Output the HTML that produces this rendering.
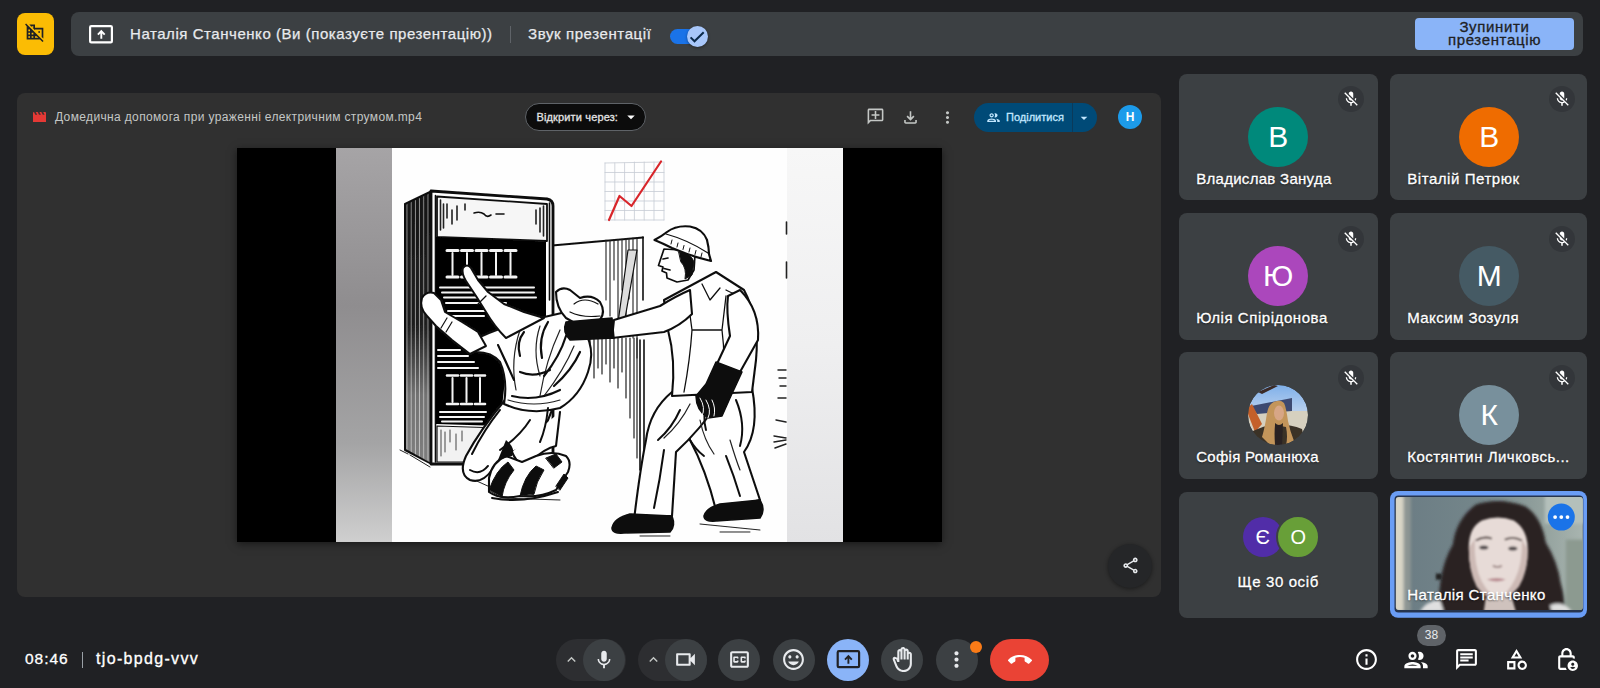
<!DOCTYPE html>
<html lang="uk"><head><meta charset="utf-8"><title>Meet</title>
<style>
*{box-sizing:border-box;margin:0;padding:0}
html,body{width:1600px;height:688px;overflow:hidden;background:#202124;font-family:"Liberation Sans",sans-serif;color:#fff}
.abs{position:absolute}
#ybtn{left:17px;top:13px;width:37.400px;height:42.200px;background:#fbbc04;border-radius:8px}
#topbar{left:71px;top:12px;width:1512px;height:44px;background:#3c4043;border-radius:8px}
.t{position:absolute;white-space:nowrap;line-height:1}
#stopbtn{-webkit-text-stroke:.3px #202124;left:1415px;top:18px;width:159px;height:32px;background:#8ab4f8;border-radius:4px;color:#202124;text-align:center;font-size:15px;line-height:13px;padding-top:2px}
#panel{left:17px;top:93px;width:1144px;height:504px;background:#303030;border-radius:8px}
#video{left:237px;top:148px;width:704.500px;height:393.600px;background:#000;box-shadow:0 2px 8px rgba(0,0,0,.5)}
.tile{position:absolute;background:#3c4043;border-radius:8px;width:198.500px;height:126.500px}
.av{position:absolute;width:60px;height:60px;border-radius:50%;left:69px;top:33px;text-align:center;font-size:30px;line-height:60px;color:#fff}
.mute{position:absolute;width:26px;height:26px;border-radius:50%;background:#33363a;left:159px;top:12.500px}
.nm{-webkit-text-stroke:.3px #fff;position:absolute;left:17px;top:96px;font-size:15px;line-height:17px;white-space:nowrap;color:#fff;text-shadow:0 1px 2px rgba(0,0,0,.6)}
.cb{position:absolute;width:40px;height:40px;border-radius:50%;background:#3c4043;top:639px}
</style></head><body>
<div id="ybtn" class="abs"></div>
<div id="topbar" class="abs"></div>
<div class="t" id="tt1" style="-webkit-text-stroke:.25px #e8eaed;letter-spacing:.55px;left:130px;top:26px;font-size:15px;color:#e8eaed">Наталія Станченко (Ви (показуєте презентацію))</div>
<div class="abs" style="left:510px;top:26px;width:1px;height:17px;background:#5f6368"></div>
<div class="t" id="tt2" style="-webkit-text-stroke:.25px #e8eaed;letter-spacing:.6px;left:528px;top:26px;font-size:15px;color:#e8eaed">Звук презентації</div>
<div id="stopbtn" class="abs"><span id="st1" style="letter-spacing:.65px">Зупинити</span><br><span id="st2" style="letter-spacing:.64px">презентацію</span></div>
<div id="panel" class="abs"></div>
<div id="video" class="abs"></div>
<!--ART-->
<svg class="abs" id="art" style="left:237px;top:148px" width="704" height="393.600" viewBox="237 148 704 393.600">
<defs>
<linearGradient id="gl" x1="0" y1="0" x2="0" y2="1"><stop offset="0" stop-color="#a6a4a6"/><stop offset=".4" stop-color="#8f8d8f"/><stop offset=".75" stop-color="#a4a4a5"/><stop offset="1" stop-color="#cfcfcf"/></linearGradient>
<linearGradient id="gr" x1="0" y1="0" x2="0" y2="1"><stop offset="0" stop-color="#f7f7f7"/><stop offset=".5" stop-color="#efeff0"/><stop offset="1" stop-color="#e2e2e4"/></linearGradient>
<pattern id="hat" width="4.200" height="8" patternUnits="userSpaceOnUse"><rect width="4.200" height="8" fill="#141414"/><rect x="3.300" width="0.900" height="8" fill="#9a9a9a"/></pattern><linearGradient id="sidefade" x1="0" y1="0" x2="0" y2="1"><stop offset="0" stop-color="#fff" stop-opacity="0"/><stop offset=".5" stop-color="#fff" stop-opacity=".05"/><stop offset=".75" stop-color="#fff" stop-opacity=".4"/><stop offset="1" stop-color="#fff" stop-opacity=".45"/></linearGradient>
<filter id="soft"><feGaussianBlur stdDeviation="0.45"/></filter>
</defs>
<rect x="237" y="148" width="704" height="394" fill="#000"/>
<rect x="336" y="148" width="56" height="394" fill="url(#gl)"/>
<rect x="392" y="148" width="395" height="394" fill="#fefefe"/>
<rect x="787" y="148" width="56" height="394" fill="url(#gr)"/>
<g filter="url(#soft)" stroke-linejoin="round" stroke-linecap="round">
<!-- chart -->
<g stroke="#c5cad3" stroke-width="0.8" fill="none">
<path d="M605 163L663 162M605 172.500H664M605 182H664M605 191.500H664M605 201H664M605 210.500H664M605 220H664"/>
<path d="M605 163V220M614.800 163V220M624.600 163V220M634.400 162V220M644.200 162V220M654 162V220M664 162V220"/>
</g>
<path d="M609 220L619.500 196L631.500 206L661 161.500" stroke="#d8262c" stroke-width="2.200" fill="none"/>
<!-- floor shadow lines -->
<path d="M410 455l20 12M400 450l8 4M470 478l40 18M500 498l60 2M560 425h35" stroke="#222" stroke-width="1" fill="none"/>
<!-- cabinet door (open) -->
<path d="M552 245L643 237L644 470L552 470Z" fill="#fff" stroke="none"/>
<path d="M552 245.500L643 237.500" stroke="#111" stroke-width="2" fill="none"/>
<path d="M643 237V300M640 340V470M644 340V452" stroke="#111" stroke-width="1.600" fill="none"/>
<path d="M606 240v60M610 241v75M614 240v40M618 240v82M622 240v50M626 239v92M629 239v60M633 238v100M637 238v120" stroke="#222" stroke-width="1.100" fill="none"/>
<path d="M628 250L637 250L623 330L617 330Z" fill="#ddd" stroke="#111" stroke-width="1.200"/>
<path d="M582 338v28M586 338v34M590 338v24M594 338v40M598 338v30M602 338v36M606 338v26M610 338v44M614 338v30M618 338v50M622 338v34M626 338v60M630 338v80M634 338v100M637 338v120" stroke="#222" stroke-width="1.200" fill="none"/>
<!-- cabinet left side -->
<path d="M405 204L432 191V464L405 450Z" fill="url(#hat)" stroke="#111" stroke-width="2"/><path d="M406 204L431 192V463L406 449Z" fill="url(#sidefade)"/>
<!-- cabinet front -->
<path d="M431 191L547 199Q553 200 553 206V300L553 464H431Z" fill="#fff" stroke="#0c0c0c" stroke-width="2.800"/><path d="M435.500 195.500V462M549.500 203V300" stroke="#0c0c0c" stroke-width="1.600" fill="none"/>
<path d="M437 196.500L547 204V241L437 237Z" fill="#f6f6f6" stroke="#111" stroke-width="1.800"/>
<path d="M440.500 200v30M443.500 204v24M447 204v14M452 210v14M457 206v14M465 204v6M540 208v24M543.500 206v30M536 210v14" stroke="#222" stroke-width="1.600" fill="none"/>
<path d="M474 213q6-2 10 1q3 4 7 1M496 214h8" stroke="#111" stroke-width="1.600" fill="none"/>
<path d="M436 237L546 241.500V330L505 380L500 426L436 424Z" fill="#050505"/>
<!-- switches top row -->
<g stroke="#f4f4f4" stroke-width="3" fill="none">
<path d="M447 250.500h11M461.500 250.500h11M476 250.500h11M490.500 250.500h11M505 250.500h11"/>
<path d="M447 277h11M461.500 277h11M476 277h11M490.500 277h11M505 277h11"/>
</g>
<g stroke="#f4f4f4" stroke-width="2" fill="none">
<path d="M452.500 253v22M467 253v22M481.500 253v22M496 253v22M510.500 253v22"/>
<path d="M440 287.500h94M442 292.500h92M444 297.500h92M446 303h60M448 311h40M450 316h34"/>
<path d="M438 350h22M438 356h30M438 362h36M438 368h40"/>
<path d="M440 412h46M440 417h44M442 421.500h40"/>
</g>
<g stroke="#f4f4f4" stroke-width="2.600" fill="none">
<path d="M447 375.500h11M461 375.500h11M475 375.500h10M447 404h11M461 404h11M475 404h10"/>
</g>
<path d="M452.500 378v24M466.500 378v24M480 378v24" stroke="#f4f4f4" stroke-width="2" fill="none"/>
<!-- bottom panel of cabinet -->
<path d="M437 426L500 428V462H437Z" fill="#f2f2f2" stroke="#111" stroke-width="1.200"/>
<path d="M441 430v26M445 432v20M450 430v12M456 434v16M462 431v10" stroke="#444" stroke-width="1" fill="none"/>
<!-- kneeling man: legs -->
<path d="M505 400Q480 430 466 456Q458 474 470 480Q482 484 492 470Q500 458 512 452L540 440L552 410Z" fill="#fff" stroke="#111" stroke-width="2.100"/>
<path d="M512 452Q520 470 530 462Q545 448 556 446L560 412" fill="#fff" stroke="#111" stroke-width="2.100"/>
<path d="M489 478Q492 462 506 456L522 462L536 456Q552 450 566 456Q572 462 568 472L556 490Q540 498 520 496Q500 500 489 492Z" fill="#fff" stroke="#111" stroke-width="2.100"/>
<path d="M489 490Q496 470 508 462L514 470Q504 482 502 497ZM520 496Q524 476 536 466L544 470Q536 482 534 494ZM546 458l10-4l6 8l-8 6ZM556 486l8-12l4 4l-8 12Z" fill="#111" stroke="#111" stroke-width="1"/>
<path d="M492 498q30 6 66-6" stroke="#111" stroke-width="2" fill="none"/>
<!-- kneeling man: torso -->
<path d="M470 342Q500 326 540 318L566 312L584 330Q596 350 588 372Q580 396 560 408Q530 416 504 404Q508 380 500 362Q492 352 476 352Z" fill="#fff" stroke="#111" stroke-width="2.100"/>
<path d="M520 330q-10 30 -4 60M540 326q-8 24 0 50M560 330q-14 30 -20 66M574 346q-10 24 -30 50M508 400q26 8 52 0" stroke="#222" stroke-width="1.200" fill="none"/>
<path d="M498 345L514 380L506 362Z" fill="#0a0a0a" stroke="#0a0a0a" stroke-width="2"/>
<path d="M524 332q-8 10-4 24M548 322q-10 16-6 36M566 336q-6 20-22 40M580 352q-8 18-26 34M520 372q14 6 30-2M512 396q24 6 48-6" stroke="#111" stroke-width="2.200" fill="none"/>
<path d="M500 410q-16 20-28 44M530 420q-10 16-30 30M548 408q-2 20-8 34M470 470q10 6 18-4" stroke="#111" stroke-width="2" fill="none"/>
<path d="M506 440q10 8 6 16l-14 4z" fill="#111"/>
<!-- left arm (gripping) -->
<path d="M422 298Q426 291 434 293L441 300L445 312L462 322L478 332L486 346L470 354L452 340L436 326L427 316Q419 308 422 298Z" fill="#fff" stroke="#111" stroke-width="2"/>
<path d="M447 318l-6 10M452 322l-6 10" stroke="#111" stroke-width="1.200" fill="none"/>
<!-- reaching arm -->
<path d="M463 268Q467 263 471 268L478 280L488 292L504 304L524 312L544 318L506 338Q494 326 486 312L476 296L468 284Q461 274 463 268Z" fill="#fff" stroke="#111" stroke-width="2"/><path d="M486 296l-8 8" stroke="#111" stroke-width="1.300" fill="none"/>
<!-- kneeling man head -->
<path d="M556 292Q562 286 570 290L580 298Q592 294 600 302Q606 312 600 320L580 326L566 318Q556 308 556 292Z" fill="#fff" stroke="#111" stroke-width="2.100"/>
<path d="M574 304q10-8 24 0M570 312q12 6 30 4" stroke="#111" stroke-width="1.200" fill="none"/>
<!-- standing man: back leg -->
<path d="M716 392L752 388Q760 430 744 452L760 500L716 510Q706 470 690 440Q684 420 690 400Z" fill="#fff" stroke="#111" stroke-width="2.100"/>
<!-- front leg -->
<path d="M672 392L722 398Q700 430 676 452L672 516L634 520Q640 470 646 440Q650 410 672 392Z" fill="#fff" stroke="#111" stroke-width="2.100"/>
<path d="M690 404q-10 20 -26 34M700 420q4 20 14 34M730 440q6 20 10 30" stroke="#222" stroke-width="1.200" fill="none"/>
<path d="M680 410q-8 18-22 30M664 450q-4 30-10 58M708 400q-6 16-2 30M736 400q10 24 4 46M726 456q8 20 14 40M690 440q6 10 14 16" stroke="#111" stroke-width="2" fill="none"/>
<path d="M700 300q-4 40 2 90M744 300q6 30 2 60" stroke="#111" stroke-width="1.600" fill="none"/>
<!-- shoes -->
<path d="M612 528Q614 518 630 514L672 516Q676 526 670 532L624 533Q612 534 612 528Z" fill="#0a0a0a" stroke="#0a0a0a" stroke-width="1.500"/>
<path d="M704 516Q706 508 720 504L760 500Q766 510 760 518L716 521Q704 522 704 516Z" fill="#0a0a0a" stroke="#0a0a0a" stroke-width="1.500"/>
<path d="M640 536h30M700 524l60 6M720 532h30" stroke="#222" stroke-width="1" fill="none"/>
<!-- torso -->
<path d="M690 286L716 272L744 290Q760 320 756 360L752 392L672 396Q676 360 668 330L664 300Z" fill="#fff" stroke="#111" stroke-width="2.100"/>
<path d="M688 300L692 330H722L726 296M692 330Q690 360 684 392M722 330Q726 360 722 394M702 284l8 16l10-12M726 290q10 6 16 2" stroke="#111" stroke-width="1.300" fill="none"/>
<!-- extended arm -->
<path d="M690 290Q676 296 660 306L614 320L612 338L664 332Q680 326 692 314Z" fill="#fff" stroke="#111" stroke-width="2.100"/>
<path d="M566 322L612 318L614 338L570 340Q562 332 566 322Z" fill="#0a0a0a" stroke="#0a0a0a" stroke-width="1.500"/>
<!-- hanging arm -->
<path d="M740 290Q760 310 758 340L740 372L716 366L730 336Q726 310 728 296Z" fill="#fff" stroke="#111" stroke-width="2.100"/>
<path d="M716 362L742 372L730 398L722 416L708 418Q696 410 696 396L706 384Z" fill="#0a0a0a" stroke="#0a0a0a" stroke-width="1.500"/>
<path d="M700 398q6 10 2 18M706 400q6 10 2 18M712 400q4 8 2 16" stroke="#fff" stroke-width="1" fill="none"/>
<!-- head -->
<path d="M664 249L661 258L658.500 265.500L663 267L662 271L666.500 273L667 278L677 282L688 280L694 270L695 255L680 250Z" fill="#fff" stroke="#111" stroke-width="1.700"/>
<path d="M679 252Q691 253 694 262L692 275L685 279Q687 268 681 262Z" fill="#111" stroke="#111" stroke-width="1"/>
<path d="M663 259l5-1M664 268.500l6 1.500" stroke="#111" stroke-width="1.700" fill="none"/>
<!-- helmet -->
<path d="M654.500 240Q662 236 667 232Q676 225 690 226.500Q703 229 707 240Q709 248 709 254L711 261Q690 256 672 248Q662 243 654.500 240Z" fill="#fff" stroke="#111" stroke-width="2.200"/>
<path d="M666 234Q688 240 708 253" stroke="#111" stroke-width="1.200" fill="none"/>
<path d="M672 240l-1 4M678 243l-1 4M684 245.500l-1 4M690 248l-1 4M696 250.500l-1 4M702 253l-1 4" stroke="#111" stroke-width="1" fill="none"/>
<!-- right edge marks -->
<path d="M786.500 222v12M786.500 262v16" stroke="#222" stroke-width="1.600" fill="none"/>
<path d="M778 370h8M779 378h7M780 386h6M778 398h8M776 420l10 2M774 436l12 2M774 442l12-2M775 448l11-4" stroke="#222" stroke-width="1.500" fill="none"/>
</g>
</svg>

<!--/ART-->
<div class="t" id="ft" style="letter-spacing:.356px;left:55px;top:111px;font-size:12px;color:#c4c7c5">Домедична допомога при ураженні електричним струмом.mp4</div>

<div class="tile" style="left:1179.200px;top:73.700px"><div class="av" style="background:#00897b">В</div><div class="mute"><svg width="18" height="18" viewBox="0 0 24 24" style="position:absolute;left:4px;top:4px"><path fill="#fff" d="M19 11h-1.700c0 .740-.160 1.430-.430 2.050l1.230 1.230c.560-.980.900-2.090.900-3.280zm-4.020.170c0-.060.020-.110.020-.170V5c0-1.660-1.340-3-3-3S9 3.340 9 5v.180l5.980 5.990zM4.270 3L3 4.270l6.010 6.010V11c0 1.660 1.330 3 2.990 3 .220 0 .440-.030.650-.080l1.660 1.660c-.710.330-1.500.520-2.310.520-2.760 0-5.300-2.100-5.300-5.100H5c0 3.410 2.720 6.230 6 6.720V21h2v-3.280c.910-.130 1.770-.450 2.540-.900L19.730 21 21 19.730 4.270 3z"/></svg></div><div id="n1" class="nm" style="letter-spacing:0.29px">Владислав Зануда</div></div>
<div class="tile" style="left:1390.200px;top:73.700px;width:197.200px"><div class="av" style="background:#ef6c00">В</div><div class="mute"><svg width="18" height="18" viewBox="0 0 24 24" style="position:absolute;left:4px;top:4px"><path fill="#fff" d="M19 11h-1.700c0 .740-.160 1.430-.430 2.050l1.230 1.230c.560-.980.900-2.090.900-3.280zm-4.020.170c0-.060.020-.110.020-.170V5c0-1.660-1.340-3-3-3S9 3.340 9 5v.180l5.980 5.990zM4.270 3L3 4.270l6.010 6.010V11c0 1.660 1.330 3 2.990 3 .220 0 .440-.030.650-.080l1.660 1.660c-.710.330-1.500.520-2.310.520-2.760 0-5.300-2.100-5.300-5.100H5c0 3.410 2.720 6.230 6 6.720V21h2v-3.280c.910-.130 1.770-.450 2.540-.900L19.730 21 21 19.730 4.270 3z"/></svg></div><div id="n2" class="nm" style="letter-spacing:0.56px">Віталій Петрюк</div></div>
<div class="tile" style="left:1179.200px;top:213px"><div class="av" style="background:#ab47bc">Ю</div><div class="mute"><svg width="18" height="18" viewBox="0 0 24 24" style="position:absolute;left:4px;top:4px"><path fill="#fff" d="M19 11h-1.700c0 .740-.160 1.430-.430 2.050l1.230 1.230c.560-.980.900-2.090.900-3.280zm-4.020.170c0-.060.020-.110.020-.170V5c0-1.660-1.340-3-3-3S9 3.340 9 5v.180l5.980 5.990zM4.270 3L3 4.270l6.010 6.010V11c0 1.660 1.330 3 2.990 3 .220 0 .440-.030.650-.080l1.660 1.660c-.710.330-1.500.520-2.310.520-2.760 0-5.300-2.100-5.300-5.100H5c0 3.410 2.720 6.230 6 6.720V21h2v-3.280c.910-.130 1.770-.450 2.540-.900L19.730 21 21 19.730 4.270 3z"/></svg></div><div id="n3" class="nm" style="letter-spacing:0.56px">Юлія Спірідонова</div></div>
<div class="tile" style="left:1390.200px;top:213px;width:197.200px"><div class="av" style="background:#455a64">М</div><div class="mute"><svg width="18" height="18" viewBox="0 0 24 24" style="position:absolute;left:4px;top:4px"><path fill="#fff" d="M19 11h-1.700c0 .740-.160 1.430-.430 2.050l1.230 1.230c.560-.980.900-2.090.900-3.280zm-4.020.170c0-.060.020-.110.020-.170V5c0-1.660-1.340-3-3-3S9 3.340 9 5v.180l5.980 5.990zM4.270 3L3 4.270l6.010 6.010V11c0 1.660 1.330 3 2.990 3 .220 0 .440-.030.650-.080l1.660 1.660c-.710.330-1.500.520-2.310.520-2.760 0-5.300-2.100-5.300-5.100H5c0 3.410 2.720 6.230 6 6.720V21h2v-3.280c.910-.130 1.770-.450 2.540-.900L19.730 21 21 19.730 4.270 3z"/></svg></div><div id="n4" class="nm" style="letter-spacing:0.45px">Максим Зозуля</div></div>
<div class="tile" style="left:1179.200px;top:352.300px"><svg class="av" style="left:68.800px;top:32.700px" width="60.500" height="60.500" viewBox="0 0 60 60"><defs><clipPath id="cpa"><circle cx="30" cy="30" r="30"/></clipPath><filter id="bla"><feGaussianBlur stdDeviation="0.6"/></filter><linearGradient id="sky" x1="0" y1="0" x2="0" y2="1"><stop offset="0" stop-color="#7fb0ea"/><stop offset="1" stop-color="#c0d4ee"/></linearGradient></defs>
<g clip-path="url(#cpa)"><g filter="url(#bla)">
<rect width="60" height="30" fill="url(#sky)"/>
<rect x="0" y="26" width="60" height="22" fill="#d6d0bf"/>
<path d="M3 21L44 13V26L9 29Z" fill="#3d4a70"/>
<path d="M10 7L26 0L30 1L14 9Z" fill="#3a2a26"/>
<path d="M-2 24L4 19L14 39L7 47Z" fill="#c4602a"/>
<path d="M5 46Q30 34 54 44L58 62H0Z" fill="#3a3028"/>
<path d="M29 16Q21 17 19 28Q17 42 14 52L22 60H27Q26 48 27 40L38 42Q40 52 38 60L46 56Q42 46 40 36Q38 22 36 18Q33 15 29 16Z" fill="#c3955a"/>
<ellipse cx="31" cy="28" rx="5" ry="7.500" fill="#d7a686"/>
<path d="M27 38Q31 42 35 38L34 60H27Z" fill="#2a2420"/>
</g></g></svg><div class="mute"><svg width="18" height="18" viewBox="0 0 24 24" style="position:absolute;left:4px;top:4px"><path fill="#fff" d="M19 11h-1.700c0 .740-.160 1.430-.430 2.050l1.230 1.230c.560-.980.900-2.090.900-3.280zm-4.020.170c0-.060.020-.110.020-.170V5c0-1.660-1.340-3-3-3S9 3.340 9 5v.180l5.980 5.990zM4.270 3L3 4.270l6.010 6.010V11c0 1.660 1.330 3 2.990 3 .220 0 .440-.030.650-.080l1.660 1.660c-.710.330-1.500.520-2.310.520-2.760 0-5.300-2.100-5.300-5.100H5c0 3.410 2.720 6.230 6 6.720V21h2v-3.280c.910-.130 1.770-.450 2.540-.900L19.730 21 21 19.730 4.270 3z"/></svg></div><div id="n5" class="nm" style="letter-spacing:0.29px">Софія Романюха</div></div>
<div class="tile" style="left:1390.200px;top:352.300px;width:197.200px"><div class="av" style="background:#78909c">К</div><div class="mute"><svg width="18" height="18" viewBox="0 0 24 24" style="position:absolute;left:4px;top:4px"><path fill="#fff" d="M19 11h-1.700c0 .740-.160 1.430-.430 2.050l1.230 1.230c.560-.980.900-2.090.900-3.280zm-4.020.170c0-.060.020-.110.020-.170V5c0-1.660-1.340-3-3-3S9 3.340 9 5v.180l5.980 5.990zM4.270 3L3 4.270l6.010 6.010V11c0 1.660 1.330 3 2.990 3 .220 0 .440-.030.650-.080l1.660 1.660c-.710.330-1.500.520-2.310.520-2.760 0-5.300-2.100-5.300-5.100H5c0 3.410 2.720 6.230 6 6.720V21h2v-3.280c.910-.130 1.770-.450 2.540-.900L19.730 21 21 19.730 4.270 3z"/></svg></div><div id="n6" class="nm" style="letter-spacing:0.49px">Костянтин Личковсь...</div></div>
<div class="tile" style="left:1179.200px;top:491.700px"><div class="abs" style="left:63.400px;top:25.600px;width:40px;height:40px;border-radius:50%;background:#512da8;color:#fff;font-size:20px;line-height:40px;text-align:center">Є</div><div class="abs" style="left:97px;top:23.700px;width:44px;height:44px;border-radius:50%;background:#689f38;border:2px solid #3c4043;color:#fff;font-size:20px;line-height:40px;text-align:center">О</div><div id="n7" class="nm" style="letter-spacing:0.62px;left:0;width:198px;text-align:center;top:81px">Ще 30 осіб</div></div>
<svg class="abs" style="left:1390.200px;top:491.400px" width="197" height="126.800" viewBox="1390.200 491.400 197 126.800">
<defs><clipPath id="cpv"><rect x="1396" y="497.500" width="187" height="113" rx="3"/></clipPath><filter id="blv"><feGaussianBlur stdDeviation="1.600"/></filter><filter id="blv2"><feGaussianBlur stdDeviation="0.800"/></filter>
<linearGradient id="wall" x1="0" y1="0" x2="1" y2="0"><stop offset="0" stop-color="#6b7c84"/><stop offset=".45" stop-color="#74868a"/><stop offset=".8" stop-color="#95a39f"/><stop offset="1" stop-color="#a9b5b0"/></linearGradient></defs>
<rect x="1390.200" y="491.400" width="197" height="126.800" rx="8" fill="#6a9df5"/>
<rect x="1394.700" y="496" width="188.800" height="117" rx="4" fill="#263550"/>
<g clip-path="url(#cpv)">
<rect x="1396" y="497" width="188" height="114" fill="url(#wall)"/>
<g filter="url(#blv)">
<rect x="1394" y="496" width="10" height="116" fill="#d9d5c6"/>
<rect x="1404" y="496" width="7" height="116" fill="#8d9593"/>
<rect x="1545" y="494" width="42" height="30" fill="#b4c0bb"/>
<rect x="1566" y="540" width="20" height="75" fill="#8c9a90"/>
<path d="M1476 505Q1500 497 1526 507Q1542 518 1546 543Q1558 562 1561 584Q1566 600 1564 614H1440Q1438 596 1441 580Q1444 560 1453 545Q1456 520 1476 505Z" fill="#2a2124"/>
<path d="M1420 612Q1426 602 1440 600L1444 612ZM1550 606Q1562 600 1572 612H1552Z" fill="#e0e0e0"/>
</g>
<g filter="url(#blv2)">
<path d="M1469 548Q1469 528 1482 521Q1498 515 1514 521Q1528 530 1528 550Q1528 572 1519 587Q1509 600 1498 600Q1486 600 1477 587Q1469 572 1469 548Z" fill="#e7dbd7"/><path d="M1469 548Q1469 572 1477 587Q1486 600 1498 600Q1490 596 1482 582Q1474 566 1475 540ZM1528 550Q1528 572 1519 587Q1509 600 1498 600Q1508 594 1515 580Q1523 564 1522 540Z" fill="#cdbab5"/>
<path d="M1486 598h26l4 14h-32z" fill="#cfc2bd"/>
<path d="M1476 541q8-5 16-2M1505 540q9-4 17 1" stroke="#4a3a38" stroke-width="1.800" fill="none"/>
<ellipse cx="1484" cy="548" rx="4.500" ry="2" fill="#4d4648"/><ellipse cx="1513" cy="549" rx="4.500" ry="2" fill="#4d4648"/>
<path d="M1493 566q5 3 9 0" stroke="#a08a88" stroke-width="2" fill="none"/>
<path d="M1487 580q10-3 19 0q-9 4-19 0z" fill="#b98a90"/>
<rect x="1436" y="574" width="6" height="6" fill="#222"/>
</g>
</g>
<circle cx="1561.500" cy="517.500" r="13.500" fill="#1a73e8"/>
<circle cx="1555.300" cy="517.500" r="1.900" fill="#fff"/><circle cx="1561.500" cy="517.500" r="1.900" fill="#fff"/><circle cx="1567.700" cy="517.500" r="1.900" fill="#fff"/>
</svg>
<div id="n8" class="nm" style="letter-spacing:0.38px;left:1407.300px;top:585.800px">Наталія Станченко</div>

<div class="t" id="clk" style="-webkit-text-stroke:.3px #fff;letter-spacing:.98px;left:25px;top:651.400px;font-size:15.500px;color:#fff">08:46</div>
<div class="abs" style="left:82px;top:652px;width:1px;height:16px;background:#9aa0a6"></div>
<div class="t" id="code" style="-webkit-text-stroke:.3px #fff;letter-spacing:1.33px;left:96px;top:650.850px;font-size:16px;color:#fff">tjo-bpdg-vvv</div>
<div class="abs" style="left:556px;top:638.600px;width:69.500px;height:42px;border-radius:21px;background:#2d2e31"></div>
<div class="abs" style="left:583px;top:638.600px;width:42px;height:42px;border-radius:50%;background:#3c4043"></div>
<svg class="abs" style="left:563px;top:650.8px" width="17" height="17" viewBox="0 0 24 24"><path fill="#c4c7c5" d="M12 8l-6 6 1.410 1.410L12 10.830l4.590 4.580L18 14z"/></svg>
<svg class="abs" style="left:593.3px;top:648.5px" width="22" height="22" viewBox="0 0 24 24"><path fill="#e8eaed" d="M12 14c1.660 0 2.990-1.340 2.990-3L15 5c0-1.660-1.340-3-3-3S9 3.340 9 5v6c0 1.660 1.340 3 3 3zm5.300-3c0 3-2.540 5.100-5.300 5.100S6.700 14 6.700 11H5c0 3.410 2.720 6.230 6 6.720V21h2v-3.280c3.280-.480 6-3.300 6-6.720h-1.700z"/></svg>
<div class="abs" style="left:637.500px;top:638.600px;width:69.500px;height:42px;border-radius:21px;background:#2d2e31"></div>
<div class="abs" style="left:664.5px;top:638.600px;width:42px;height:42px;border-radius:50%;background:#3c4043"></div>
<svg class="abs" style="left:644.9px;top:650.8px" width="17" height="17" viewBox="0 0 24 24"><path fill="#c4c7c5" d="M12 8l-6 6 1.410 1.410L12 10.830l4.590 4.580L18 14z"/></svg>
<svg class="abs" style="left:673.1px;top:647px" width="25" height="25" viewBox="0 0 24 24"><path fill="#e8eaed" d="M15 8v8H5V8h10m1-2H4c-.550 0-1 .450-1 1v10c0 .550.450 1 1 1h12c.550 0 1-.450 1-1v-3.500l4 4v-11l-4 4V7c0-.550-.450-1-1-1z"/></svg>
<div class="abs" style="left:718.1px;top:638.600px;width:42px;height:42px;border-radius:50%;background:#3c4043"></div>
<svg class="abs" style="left:726.6px;top:647px" width="25" height="25" viewBox="0 0 24 24"><path fill="#e8eaed" d="M19 4H5c-1.110 0-2 .900-2 2v12c0 1.100.890 2 2 2h14c1.100 0 2-.900 2-2V6c0-1.100-.900-2-2-2zm0 14H5V6h14v12zM7 15h3c.550 0 1-.450 1-1v-1H9.500v.500h-2v-3h2v.500H11v-1c0-.550-.450-1-1-1H7c-.550 0-1 .450-1 1v4c0 .550.450 1 1 1zm7 0h3c.550 0 1-.450 1-1v-1h-1.500v.500h-2v-3h2v.500H18v-1c0-.550-.450-1-1-1h-3c-.550 0-1 .450-1 1v4c0 .550.450 1 1 1z"/></svg>
<div class="abs" style="left:772.9px;top:638.600px;width:42px;height:42px;border-radius:50%;background:#3c4043"></div>
<svg class="abs" style="left:781.4px;top:647px" width="25" height="25" viewBox="0 0 24 24"><path fill="#e8eaed" d="M11.990 2C6.470 2 2 6.480 2 12s4.470 10 9.990 10C17.520 22 22 17.520 22 12S17.520 2 11.990 2zM12 20c-4.420 0-8-3.580-8-8s3.580-8 8-8 8 3.580 8 8-3.580 8-8 8zm3.500-9c.830 0 1.500-.670 1.500-1.500S16.330 8 15.500 8 14 8.670 14 9.500s.670 1.500 1.500 1.500zm-7 0c.830 0 1.500-.670 1.500-1.500S9.330 8 8.500 8 7 8.670 7 9.500 7.670 11 8.500 11zm3.500 6.500c2.330 0 4.310-1.460 5.110-3.500H6.890c.800 2.040 2.780 3.500 5.110 3.500z"/></svg>
<div class="abs" style="left:826.9px;top:638.600px;width:42px;height:42px;border-radius:50%;background:#8ab4f8"></div>
<svg class="abs" style="left:835px;top:648px" width="26" height="22" viewBox="835 648 26 22"><rect x="837.700" y="651.200" width="21.400" height="16" rx="1.200" fill="none" stroke="#202124" stroke-width="2.200"/><path d="M848.400 663.700V656.500M845 659.600L848.400 656.100L851.800 659.600" fill="none" stroke="#202124" stroke-width="1.900"/></svg>
<div class="abs" style="left:881.3px;top:638.600px;width:42px;height:42px;border-radius:50%;background:#3c4043"></div>
<svg class="abs" style="left:889.8px;top:647px" width="25" height="25" viewBox="0 0 24 24"><path fill="#e8eaed" d="M21 7c0-1.380-1.120-2.500-2.500-2.500-.170 0-.340.020-.500.050V4c0-1.380-1.120-2.500-2.500-2.500-.230 0-.460.030-.670.090C14.460.660 13.560 0 12.500 0c-1.230 0-2.250.890-2.460 2.060C9.870 2.020 9.690 2 9.500 2 8.120 2 7 3.120 7 4.500v5.890c-.340-.310-.760-.540-1.220-.660L5.010 9.520c-.830-.230-1.700.090-2.190.830-.380.570-.400 1.310-.150 1.950l2.560 6.430C6.490 21.910 9.570 24 13 24c4.420 0 8-3.580 8-8V7zm-2 9c0 3.310-2.690 6-6 6-2.610 0-4.950-1.590-5.910-4.010l-2.600-6.540 1.530.380L7 14.500h2v-10c0-.280.220-.500.500-.500s.500.220.500.500V12h2V2.500c0-.280.220-.500.500-.500s.500.220.500.500V12h2V4c0-.280.220-.500.500-.500s.500.220.500.500v8h2V7c0-.280.220-.500.500-.500s.500.220.500.500v9z"/></svg>
<div class="abs" style="left:935.7px;top:638.600px;width:42px;height:42px;border-radius:50%;background:#3c4043"></div>
<svg class="abs" style="left:944.2px;top:647px" width="25" height="25" viewBox="0 0 24 24"><path fill="#e8eaed" d="M12 8c1.100 0 2-.900 2-2s-.900-2-2-2-2 .900-2 2 .900 2 2 2zm0 2c-1.100 0-2 .900-2 2s.900 2 2 2 2-.900 2-2-.900-2-2-2zm0 6c-1.100 0-2 .900-2 2s.900 2 2 2 2-.900 2-2-.900-2-2-2z"/></svg>
<div class="abs" style="left:970px;top:640.750px;width:12px;height:12px;border-radius:50%;background:#fa7b17"></div>
<div class="abs" style="left:990px;top:638.600px;width:59px;height:42px;border-radius:21px;background:#ea4335"></div>
<svg class="abs" style="left:1007.5px;top:647.5px" width="24" height="24" viewBox="0 0 24 24"><path fill="#fff" d="M12 9c-1.600 0-3.150.250-4.600.720v3.100c0 .390-.230.740-.560.900-.980.490-1.870 1.120-2.660 1.850-.180.180-.430.280-.700.280-.280 0-.530-.110-.710-.290L.290 13.080c-.180-.170-.290-.420-.290-.700 0-.280.110-.530.290-.710C3.340 8.780 7.460 7 12 7s8.660 1.780 11.710 4.670c.180.180.290.430.290.710 0 .280-.110.530-.290.710l-2.480 2.480c-.180.180-.430.290-.710.290-.270 0-.520-.110-.700-.280-.790-.740-1.690-1.360-2.670-1.850-.330-.160-.560-.500-.560-.900v-3.100C15.150 9.250 13.600 9 12 9z"/></svg>
<svg class="abs" style="left:1353.5px;top:647.25px" width="25" height="25" viewBox="0 0 24 24"><path fill="#fff" d="M11 7h2v2h-2zm0 4h2v6h-2zm1-9C6.480 2 2 6.480 2 12s4.480 10 10 10 10-4.480 10-10S17.520 2 12 2zm0 18c-4.410 0-8-3.590-8-8s3.590-8 8-8 8 3.590 8 8-3.590 8-8 8z"/></svg>
<svg class="abs" style="left:1402px;top:645.9px" width="28" height="28" viewBox="0 0 24 24"><path fill="#fff" d="M9 13.750c-2.340 0-7 1.170-7 3.500V19h14v-1.750c0-2.330-4.660-3.500-7-3.500zM4.340 17c.840-.580 2.870-1.250 4.660-1.250s3.820.670 4.660 1.250H4.340zM9 12c1.930 0 3.500-1.570 3.500-3.500S10.930 5 9 5 5.500 6.570 5.500 8.500 7.070 12 9 12zm0-5c.830 0 1.500.670 1.500 1.500S9.830 10 9 10s-1.500-.670-1.500-1.500S8.170 7 9 7zm7.040 6.810c1.160.840 1.960 1.960 1.960 3.440V19h4v-1.750c0-2.020-3.500-3.170-5.960-3.440zM15 12c1.930 0 3.500-1.570 3.500-3.500S16.930 5 15 5c-.540 0-1.040.130-1.500.350.630.890 1 1.980 1 3.150s-.370 2.260-1 3.150c.460.220.960.350 1.500.350z"/></svg>
<svg class="abs" style="left:1453.8px;top:647.25px" width="25" height="25" viewBox="0 0 24 24"><path fill="#fff" d="M4 4h16v12H5.170L4 17.170V4m0-2c-1.100 0-1.990.900-1.990 2L2 22l4-4h14c1.100 0 2-.900 2-2V4c0-1.100-.900-2-2-2H4zm2 10h8v2H6v-2zm0-3h12v2H6V9zm0-3h12v2H6V6z"/></svg>
<svg class="abs" style="left:1504.3px;top:647.25px" width="25" height="25" viewBox="0 0 24 24"><path fill="#fff" d="M12 2l-5.500 9h11L12 2zm0 3.840L13.930 9h-3.870L12 5.840zM17.500 13c-2.490 0-4.500 2.010-4.500 4.500s2.010 4.500 4.500 4.500 4.500-2.010 4.500-4.500-2.010-4.500-4.500-4.500zm0 7c-1.380 0-2.500-1.120-2.500-2.500s1.120-2.500 2.500-2.500 2.500 1.120 2.500 2.500-1.120 2.500-2.500 2.500zM3 21.500h8v-8H3v8zm2-6h4v4H5v-4z"/></svg>
<svg class="abs" style="left:1554px;top:647.25px" width="25" height="25" viewBox="0 0 24 24"><path fill="#fff" d="M18 11c.700 0 1.370.100 2 .290V10c0-1.100-.900-2-2-2h-1V6c0-2.760-2.240-5-5-5S7 3.240 7 6v2H6c-1.100 0-2 .900-2 2v10c0 1.100.900 2 2 2h6.260c-.420-.600-.750-1.280-.970-2H6V10h12v1zM9 6c0-1.660 1.340-3 3-3s3 1.340 3 3v2H9V6zm9 7c-2.760 0-5 2.240-5 5s2.240 5 5 5 5-2.240 5-5-2.240-5-5-5zm0 2c.830 0 1.500.670 1.500 1.500S18.830 18 18 18s-1.500-.670-1.500-1.500.670-1.500 1.500-1.500zm0 6c-1.030 0-1.940-.520-2.480-1.320.730-.420 1.570-.680 2.480-.680s1.750.260 2.480.680c-.540.800-1.450 1.320-2.480 1.320z"/></svg>
<div class="abs" id="badge" style="left:1417px;top:625px;width:29px;height:21px;border-radius:11px;background:#5f6368;color:#e8eaed;font-size:12px;line-height:21px;text-align:center">38</div>
<svg class="abs" style="left:25.2px;top:21.6px" width="20" height="20" viewBox="0 0 24 24"><path fill="#202124" d="M8 5h2v2h-.900L12 9.900V9h8v8.900l2 2V7H12V3H5.100L8 5.900zm8 6h2v2h-2zM1.300 1.800L.1 3.100 2 5v16h16l3 3 1.300-1.300-21-20.900zM4 19v-2h2v2H4zm0-4v-2h2v2H4zm0-4V9h2v2H4zm6 8H8v-2h2v2zm-2-4v-2h2v2H8zm4 4v-2h2l2 2h-4z"/></svg>
<svg class="abs" style="left:88px;top:24px" width="26" height="21" viewBox="88 24 26 21"><rect x="90.100" y="26.100" width="21.800" height="16.300" rx="1.200" fill="none" stroke="#fff" stroke-width="2.200"/><path d="M101.300 38.700V31.500M97.900 34.600L101.300 31.100L104.700 34.600" fill="none" stroke="#fff" stroke-width="1.900"/></svg>
<div class="abs" style="left:670px;top:29.200px;width:37px;height:15.200px;border-radius:7.600px;background:#1a73e8"></div>
<div class="abs" style="left:687px;top:26.300px;width:21px;height:21px;border-radius:50%;background:#a8c7fa;box-shadow:0 1px 3px rgba(0,0,0,.4)"></div>
<svg class="abs" style="left:687px;top:26px" width="22" height="22" viewBox="687 26 22 22"><path fill="none" stroke="#0b2a4a" stroke-width="2" d="M690.600 37.400L694.500 41.300L703.700 32.200"/></svg>
<svg class="abs" style="left:33.200px;top:111.600px" width="13" height="10.600" viewBox="0 0 14 12" preserveAspectRatio="none"><path fill="#e53935" d="M1 0h12a1 1 0 0 1 1 1v10a1 1 0 0 1-1 1H1a1 1 0 0 1-1-1V1a1 1 0 0 1 1-1z"/><path fill="#303030" d="M3 0l1.500 3h-2L1 0zM7 0l1.500 3h-2L5 0zM11 0l1.500 3h-2L9 0z" opacity=".9"/></svg>
<div class="abs" style="left:524.500px;top:102.500px;width:121.500px;height:28px;border-radius:14px;background:#0c0c0c;border:1px solid #5f6368"></div>
<div class="t" id="openw" style="letter-spacing:.14px;left:536.500px;top:112px;font-size:11px;color:#e3e3e3;-webkit-text-stroke:.3px #e3e3e3">Відкрити через:</div>
<svg class="abs" style="left:621.5px;top:108px" width="18" height="18" viewBox="0 0 24 24"><path fill="#fff" d="M7 10l5 5 5-5z"/></svg>
<svg class="abs" style="transform:scaleX(-1);left:865.5px;top:107px" width="19" height="19" viewBox="0 0 24 24"><path fill="#c4c7c5" d="M22 4c0-1.100-.900-2-2-2H4c-1.100 0-2 .900-2 2v12c0 1.100.900 2 2 2h14l4 4V4zM20 17.170L18.830 16H4V4h16v13.170zM13 5h-2v4H7v2h4v4h2v-4h4V9h-4z"/></svg>
<svg class="abs" style="left:901px;top:107.5px" width="19" height="19" viewBox="0 0 24 24"><path fill="#c4c7c5" d="M12 16l-5-5 1.400-1.450 2.600 2.600V4h2v8.150l2.600-2.600L17 11zm-6 4c-.550 0-1.020-.200-1.410-.590C4.200 19.020 4 18.550 4 18v-3h2v3h12v-3h2v3c0 .550-.200 1.020-.590 1.410-.390.390-.860.590-1.410.590z"/></svg>
<svg class="abs" style="left:937.5px;top:107.5px" width="19" height="19" viewBox="0 0 24 24"><path fill="#c4c7c5" d="M12 8c1.100 0 2-.900 2-2s-.900-2-2-2-2 .900-2 2 .900 2 2 2zm0 2c-1.100 0-2 .900-2 2s.900 2 2 2 2-.900 2-2-.900-2-2-2zm0 6c-1.100 0-2 .900-2 2s.900 2 2 2 2-.900 2-2-.900-2-2-2z"/></svg>
<div class="abs" style="left:973.500px;top:102.500px;width:123.500px;height:29.500px;border-radius:15px;background:#004a77"></div>
<div class="abs" style="left:1072px;top:102.500px;width:1px;height:29.500px;background:#0b3a5a"></div>
<svg class="abs" style="left:985.5px;top:110px" width="15" height="15" viewBox="0 0 24 24"><path fill="#c2e7ff" d="M9 13.750c-2.340 0-7 1.170-7 3.500V19h14v-1.750c0-2.330-4.660-3.500-7-3.500zM4.340 17c.840-.580 2.870-1.250 4.660-1.250s3.820.670 4.660 1.250H4.340zM9 12c1.930 0 3.500-1.570 3.500-3.500S10.930 5 9 5 5.500 6.570 5.500 8.500 7.070 12 9 12zm0-5c.830 0 1.500.670 1.500 1.500S9.830 10 9 10s-1.500-.670-1.500-1.500S8.170 7 9 7zm7.040 6.810c1.160.840 1.960 1.960 1.960 3.440V19h4v-1.750c0-2.020-3.500-3.170-5.960-3.440zM15 12c1.930 0 3.500-1.570 3.500-3.500S16.930 5 15 5c-.540 0-1.040.130-1.500.350.630.890 1 1.980 1 3.150s-.370 2.260-1 3.150c.460.220.960.350 1.500.350z"/></svg>
<div class="t" id="sharet" style="left:1006px;top:112px;font-size:11px;color:#c2e7ff;-webkit-text-stroke:.3px #c2e7ff">Поділитися</div>
<svg class="abs" style="left:1076px;top:110px" width="16" height="16" viewBox="0 0 24 24"><path fill="#c2e7ff" d="M7 10l5 5 5-5z"/></svg>
<div class="abs" style="left:1118px;top:105px;width:24px;height:24px;border-radius:50%;background:#1c9bea;color:#fff;font-size:12px;font-weight:bold;line-height:24px;text-align:center">Н</div>
<div class="abs" style="left:1108px;top:543.500px;width:44px;height:44px;border-radius:50%;background:#252628;box-shadow:0 1px 4px rgba(0,0,0,.45)"></div>
<svg class="abs" style="left:1120.5px;top:556px" width="19" height="19" viewBox="0 0 24 24"><path fill="#e8eaed" d="M18 16.080c-.760 0-1.440.300-1.960.770L8.910 12.700c.050-.230.090-.460.090-.700s-.040-.470-.090-.700l7.050-4.110c.540.500 1.250.810 2.040.810 1.660 0 3-1.340 3-3s-1.340-3-3-3-3 1.340-3 3c0 .240.040.470.090.700L8.040 9.810C7.500 9.310 6.790 9 6 9c-1.660 0-3 1.340-3 3s1.340 3 3 3c.790 0 1.500-.310 2.040-.810l7.120 4.160c-.050.210-.080.430-.080.650 0 1.610 1.310 2.920 2.920 2.920s2.920-1.310 2.920-2.920c0-1.610-1.310-2.920-2.920-2.920zM18 4c.550 0 1 .450 1 1s-.450 1-1 1-1-.450-1-1 .450-1 1-1zM6 13c-.550 0-1-.450-1-1s.450-1 1-1 1 .450 1 1-.450 1-1 1zm12 7.020c-.550 0-1-.450-1-1s.450-1 1-1 1 .450 1 1-.450 1-1 1z"/></svg>
</body></html>
